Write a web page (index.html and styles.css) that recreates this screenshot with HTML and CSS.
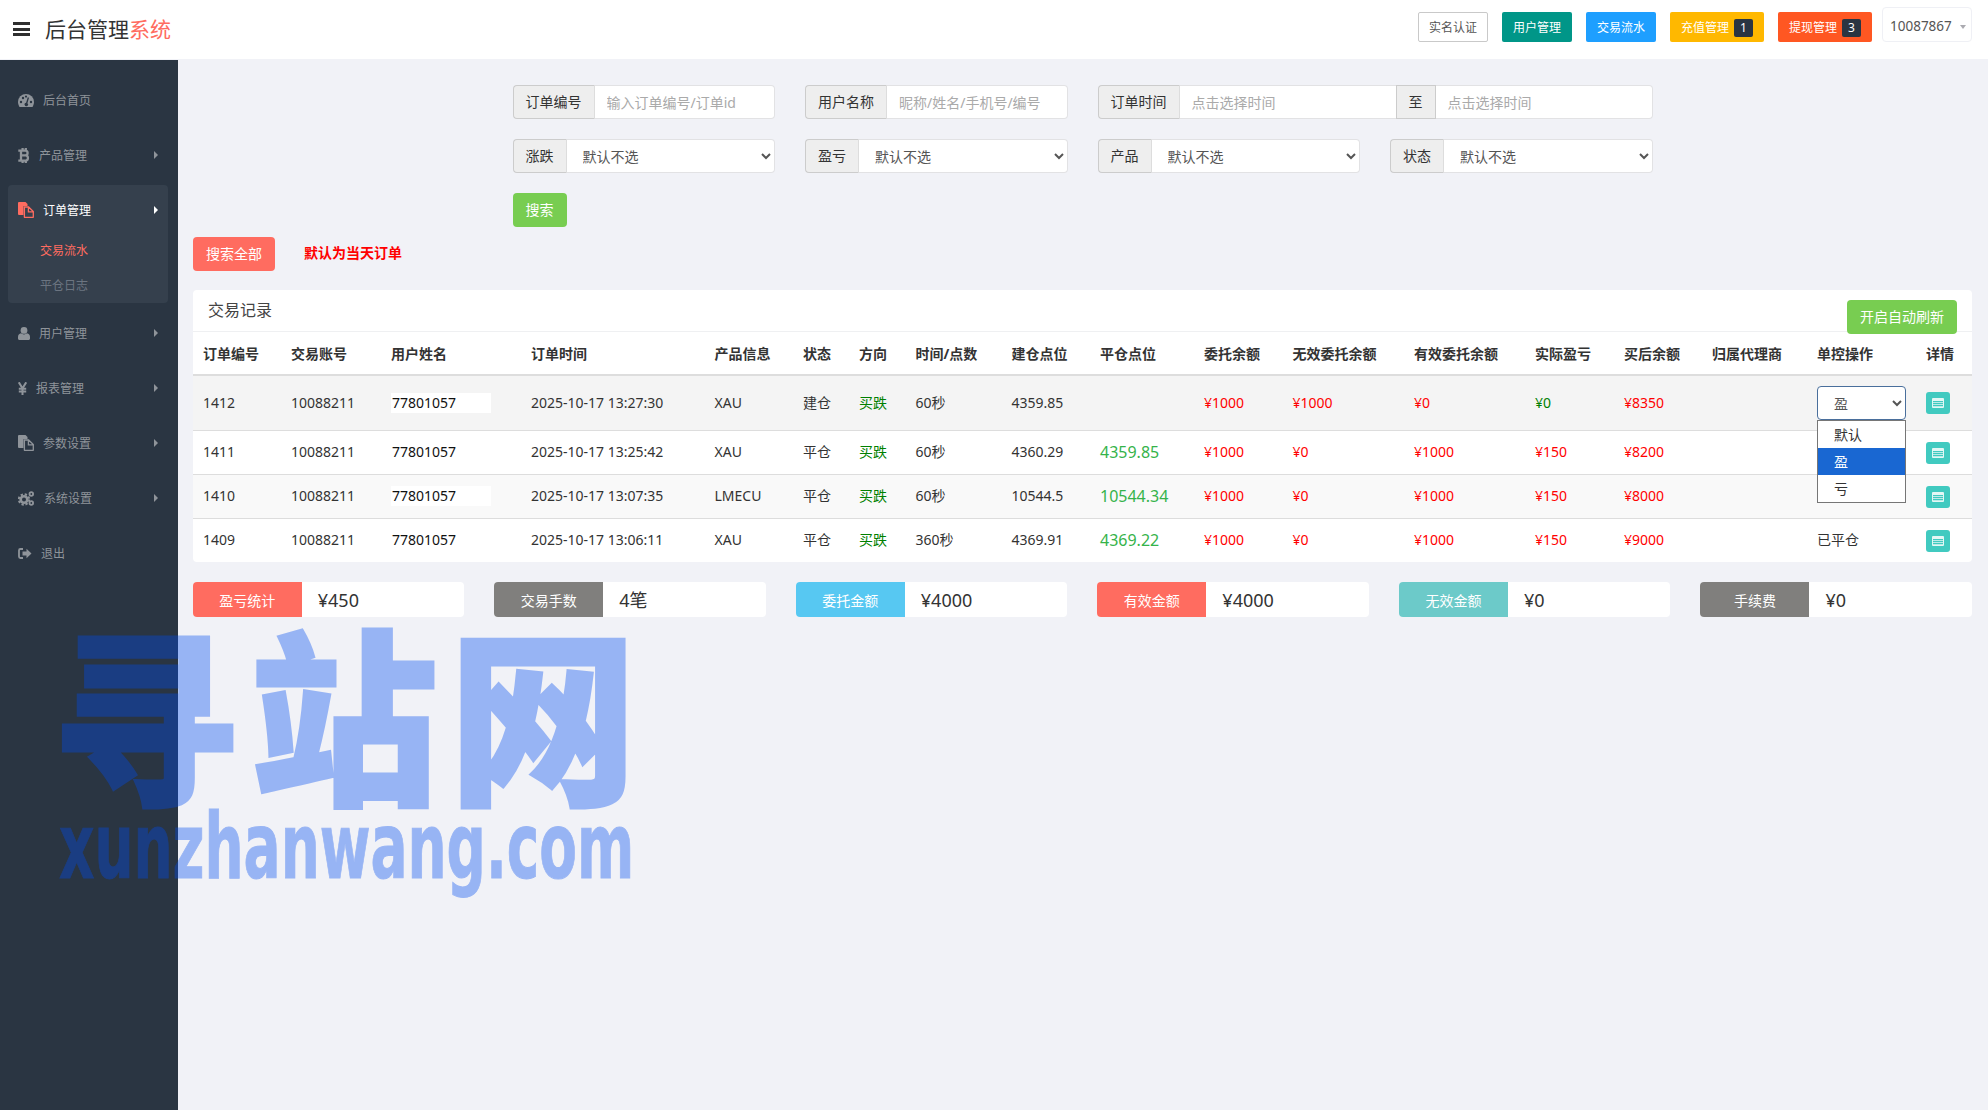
FILE: index.html
```html
<!DOCTYPE html>
<html lang="zh-CN">
<head>
<meta charset="utf-8">
<title>后台管理系统</title>
<link rel="stylesheet" href="styles.css">
</head>
<body>
<header class="topbar">
  <div class="brand">
    <span class="burger"><i></i><i></i><i></i></span>
    <span class="brand-name">后台管理<em>系统</em></span>
  </div>
  <div class="top-actions">
    <a class="tbtn tbtn-plain">实名认证</a>
    <a class="tbtn tbtn-teal">用户管理</a>
    <a class="tbtn tbtn-blue">交易流水</a>
    <a class="tbtn tbtn-yellow">充值管理<b class="badge">1</b></a>
    <a class="tbtn tbtn-orange">提现管理<b class="badge">3</b></a>
    <div class="account">10087867<i class="account-caret"></i></div>
  </div>
</header>
<div class="shell">
  <aside class="sidebar">
    <ul class="nav">
      <li class="nav-item">
        <svg class="nav-icon" width="16" height="13" viewBox="0 0 16 13"><path fill="currentColor" d="M8 0a8 8 0 0 0-8 8c0 1.8.6 3.5 1.5 5h13c.9-1.5 1.500-3.200 1.500-5a8 8 0 0 0-8-8z"/><g fill="#2a3542"><circle cx="3" cy="8" r="1.2"/><circle cx="5" cy="4" r="1.2"/><circle cx="8" cy="2.6" r="1.1"/><circle cx="13" cy="8" r="1.2"/><path d="M9.8 3.2l1.2.5-1.6 5.5a1.7 1.7 0 1 1-1.3-.4z"/></g></svg>
        <span>后台首页</span>
      </li>
      <li class="nav-item has-caret">
        <svg class="nav-icon" width="12" height="15" viewBox="0 0 12 15"><path fill="none" stroke="currentColor" stroke-width="2.3" d="M3 2.6h4.2a2.4 2.4 0 0 1 0 4.8H3h5a2.7 2.7 0 0 1 0 5.2H3M3 1.6v12M.3 2.6h3M.3 12.6h3M4.6 0v2M7.8 0v2M4.6 13v2M7.8 13v2"/></svg>
        <span>产品管理</span>
      </li>
      <li class="nav-group">
        <div class="nav-item has-caret is-open">
          <svg class="nav-icon nav-icon-hot" width="16" height="16" viewBox="0 0 16 16"><path fill="currentColor" d="M1 0h6.500L9.500 2V4H5.500v9H1a1 1 0 0 1-1-1V1a1 1 0 0 1 1-1z"/><path fill="none" stroke="currentColor" stroke-width="1.300" d="M6.400 5h4.200l4.700 4.600v5.300a.5.500 0 0 1-.5.500H6.900a.5.500 0 0 1-.5-.5zM10.400 5.200V9.800h4.700"/></svg>
          <span>订单管理</span>
        </div>
        <ul class="subnav">
          <li class="subnav-item is-current">交易流水</li>
          <li class="subnav-item">平仓日志</li>
        </ul>
      </li>
      <li class="nav-item has-caret">
        <svg class="nav-icon" width="12" height="13" viewBox="0 0 12 13"><circle cx="6" cy="3.400" r="3.400" fill="currentColor"/><path fill="currentColor" d="M0 11.500V10c0-2 1.200-3.300 3-3.700.8.700 1.900 1.100 3 1.100s2.200-.4 3-1.100c1.800.4 3 1.700 3 3.700v1.500c0 .9-.7 1.500-1.500 1.500h-9C.7 13 0 12.400 0 11.500z"/></svg>
        <span>用户管理</span>
      </li>
      <li class="nav-item has-caret">
        <svg class="nav-icon" width="9" height="13" viewBox="0 0 9 13"><path fill="none" stroke="currentColor" stroke-width="2" d="M.8.300l3.700 6 3.700-6M4.500 6v7M.8 6.800h7.400M.8 9.600h7.400"/></svg>
        <span>报表管理</span>
      </li>
      <li class="nav-item has-caret">
        <svg class="nav-icon" width="16" height="16" viewBox="0 0 16 16"><path fill="currentColor" d="M1 0h6.500L9.500 2V4H5.500v9H1a1 1 0 0 1-1-1V1a1 1 0 0 1 1-1z"/><path fill="none" stroke="currentColor" stroke-width="1.300" d="M6.400 5h4.200l4.700 4.600v5.300a.5.500 0 0 1-.5.500H6.900a.5.500 0 0 1-.5-.5zM10.400 5.200V9.800h4.700"/></svg>
        <span>参数设置</span>
      </li>
      <li class="nav-item has-caret">
        <svg class="nav-icon" width="17" height="15" viewBox="0 0 17 15"><g fill="none" stroke="currentColor"><circle cx="6" cy="8.500" r="3.300" stroke-width="2.600"/><circle cx="6" cy="8.500" r="5.200" stroke-width="2" stroke-dasharray="2.300 1.800"/><circle cx="13.300" cy="3" r="1.800" stroke-width="1.800"/><circle cx="13.300" cy="12" r="1.800" stroke-width="1.800"/></g></svg>
        <span>系统设置</span>
      </li>
      <li class="nav-item">
        <svg class="nav-icon" width="14" height="11" viewBox="0 0 14 11"><path fill="none" stroke="currentColor" stroke-width="1.800" d="M5 1H2.400A1.400 1.400 0 0 0 1 2.400v6.200A1.400 1.400 0 0 0 2.400 10H5"/><path fill="currentColor" d="M4.500 3.500h4V.8L13.500 5.500 8.500 10.200V7.500h-4z"/></svg>
        <span>退出</span>
      </li>
    </ul>
  </aside>

  <main class="main">
    <form class="filters">
      <label class="field"><span class="addon">订单编号</span><input class="control" placeholder="输入订单编号/订单id"></label>
      <label class="field"><span class="addon">用户名称</span><input class="control" placeholder="昵称/姓名/手机号/编号"></label>
      <div class="field field-wide"><span class="addon">订单时间</span><input class="control" placeholder="点击选择时间"><span class="addon addon-mid">至</span><input class="control" placeholder="点击选择时间"></div>
      <label class="field"><span class="addon">涨跌</span><select class="control"><option>默认不选</option></select></label>
      <label class="field"><span class="addon">盈亏</span><select class="control"><option>默认不选</option></select></label>
      <label class="field"><span class="addon">产品</span><select class="control"><option>默认不选</option></select></label>
      <label class="field"><span class="addon">状态</span><select class="control"><option>默认不选</option></select></label>
      <button type="button" class="search-btn">搜索</button>
    </form>

    <div class="scope">
      <a class="scope-all">搜索全部</a>
      <strong class="scope-note">默认为当天订单</strong>
    </div>

    <section class="card">
      <div class="card-head">
        <h2>交易记录</h2>
        <a class="refresh-btn">开启自动刷新</a>
      </div>
      <table class="orders">
        <colgroup><col><col><col><col><col><col><col><col><col><col><col><col><col><col><col><col><col><col></colgroup>
        <thead>
          <tr><th>订单编号</th><th>交易账号</th><th>用户姓名</th><th>订单时间</th><th>产品信息</th><th>状态</th><th>方向</th><th>时间/点数</th><th>建仓点位</th><th>平仓点位</th><th>委托余额</th><th>无效委托余额</th><th>有效委托余额</th><th>实际盈亏</th><th>买后余额</th><th>归属代理商</th><th>单控操作</th><th>详情</th></tr>
        </thead>
        <tbody>
          <tr class="row-hover">
            <td>1412</td><td>10088211</td><td><span class="name">77801057</span></td><td>2025-10-17 13:27:30</td><td>XAU</td><td>建仓</td><td class="dir">买跌</td><td>60秒</td><td>4359.85</td><td></td><td class="red">¥1000</td><td class="red">¥1000</td><td class="red">¥0</td><td class="dir">¥0</td><td class="red">¥8350</td><td></td>
            <td>
              <div class="control-pick">
                <select class="pick"><option>默认</option><option selected>盈</option><option>亏</option></select>
                <ul class="pick-list"><li>默认</li><li class="is-on">盈</li><li>亏</li></ul>
              </div>
            </td>
            <td><a class="detail"><svg width="12" height="10" viewBox="0 0 12 10"><path fill="#e4f7f5" fill-rule="evenodd" d="M1 0h10a1 1 0 0 1 1 1v8a1 1 0 0 1-1 1H1a1 1 0 0 1-1-1V1a1 1 0 0 1 1-1zM1 3v1.200h10V3zM1 5v1.200h10V5zM1 7v1.200h10V7z"/></svg></a></td>
          </tr>
          <tr>
            <td>1411</td><td>10088211</td><td><span class="name">77801057</span></td><td>2025-10-17 13:25:42</td><td>XAU</td><td>平仓</td><td class="dir">买跌</td><td>60秒</td><td>4360.29</td><td class="close">4359.85</td><td class="red">¥1000</td><td class="red">¥0</td><td class="red">¥1000</td><td class="red">¥150</td><td class="red">¥8200</td><td></td><td></td>
            <td><a class="detail"><svg width="12" height="10" viewBox="0 0 12 10"><path fill="#e4f7f5" fill-rule="evenodd" d="M1 0h10a1 1 0 0 1 1 1v8a1 1 0 0 1-1 1H1a1 1 0 0 1-1-1V1a1 1 0 0 1 1-1zM1 3v1.200h10V3zM1 5v1.200h10V5zM1 7v1.200h10V7z"/></svg></a></td>
          </tr>
          <tr class="row-soft">
            <td>1410</td><td>10088211</td><td><span class="name">77801057</span></td><td>2025-10-17 13:07:35</td><td>LMECU</td><td>平仓</td><td class="dir">买跌</td><td>60秒</td><td>10544.5</td><td class="close">10544.34</td><td class="red">¥1000</td><td class="red">¥0</td><td class="red">¥1000</td><td class="red">¥150</td><td class="red">¥8000</td><td></td><td></td>
            <td><a class="detail"><svg width="12" height="10" viewBox="0 0 12 10"><path fill="#e4f7f5" fill-rule="evenodd" d="M1 0h10a1 1 0 0 1 1 1v8a1 1 0 0 1-1 1H1a1 1 0 0 1-1-1V1a1 1 0 0 1 1-1zM1 3v1.200h10V3zM1 5v1.200h10V5zM1 7v1.200h10V7z"/></svg></a></td>
          </tr>
          <tr class="row-last">
            <td>1409</td><td>10088211</td><td><span class="name">77801057</span></td><td>2025-10-17 13:06:11</td><td>XAU</td><td>平仓</td><td class="dir">买跌</td><td>360秒</td><td>4369.91</td><td class="close">4369.22</td><td class="red">¥1000</td><td class="red">¥0</td><td class="red">¥1000</td><td class="red">¥150</td><td class="red">¥9000</td><td></td><td>已平仓</td>
            <td><a class="detail"><svg width="12" height="10" viewBox="0 0 12 10"><path fill="#e4f7f5" fill-rule="evenodd" d="M1 0h10a1 1 0 0 1 1 1v8a1 1 0 0 1-1 1H1a1 1 0 0 1-1-1V1a1 1 0 0 1 1-1zM1 3v1.200h10V3zM1 5v1.200h10V5zM1 7v1.200h10V7z"/></svg></a></td>
          </tr>
        </tbody>
      </table>
    </section>

    <section class="stats">
      <div class="stat"><span class="stat-label bg-red">盈亏统计</span><span class="stat-value">¥450</span></div>
      <div class="stat"><span class="stat-label bg-grey">交易手数</span><span class="stat-value">4笔</span></div>
      <div class="stat"><span class="stat-label bg-sky">委托金额</span><span class="stat-value">¥4000</span></div>
      <div class="stat"><span class="stat-label bg-red">有效金额</span><span class="stat-value">¥4000</span></div>
      <div class="stat"><span class="stat-label bg-aqua">无效金额</span><span class="stat-value">¥0</span></div>
      <div class="stat"><span class="stat-label bg-grey">手续费</span><span class="stat-value">¥0</span></div>
    </section>
  </main>
</div>
<div class="watermark">
  <div class="wm-cn">寻站网</div>
  <div class="wm-en">xunzhanwang.com</div>
</div>
</body>
</html>
```
FILE: styles.css
```css
* { box-sizing: border-box; }
html, body { margin: 0; height: 100%; }
body {
  position: relative;
  height: 1110px;
  overflow: hidden;
  display: flex;
  flex-direction: column;
  background: #f1f2f7;
  color: #333;
  font: 14px/20px "Noto Sans", "Noto Sans CJK SC", sans-serif;
}
ul { list-style: none; margin: 0; padding: 0; }
a { text-decoration: none; }

/* top bar */
.topbar {
  flex: none;
  height: 60px;
  padding-bottom: 1px;
  background: #fff;
  border-bottom: 1px solid #f1f2f7;
  display: flex;
  justify-content: space-between;
  align-items: flex-start;
}
.brand { display: flex; align-items: center; height: 58px; padding-left: 13px; }
.burger { display: flex; flex-direction: column; gap: 2.5px; width: 17px; margin-right: 15px; }
.burger i { display: block; height: 3px; background: #2f2f2f; }
.brand-name { font-size: 21px; line-height: 30px; color: #333; }
.brand-name em { font-style: normal; color: #ff6c60; }

.top-actions { display: flex; align-items: flex-end; gap: 14px; height: 35px; margin-top: 7px; margin-right: 16px; }
.tbtn {
  display: flex;
  align-items: center;
  justify-content: center;
  height: 30px;
  width: 70px;
  padding-top: 2px;
  border-radius: 2px;
  color: #fff;
  font-size: 12px;
}
.tbtn-plain { background: #fff; border: 1px solid #c9c9c9; color: #555; }
.tbtn-teal { background: #009688; }
.tbtn-blue { background: #1e9fff; }
.tbtn-yellow { background: #ffb800; width: 94px; }
.tbtn-orange { background: #ff5722; width: 94px; }
.badge {
  display: block;
  width: 19px;
  height: 18px;
  margin-left: 5px;
  border-radius: 2px;
  background: #2a3542;
  color: #fff;
  font-weight: 400;
  font-size: 12px;
  line-height: 18px;
  text-align: center;
}
.account {
  display: flex;
  align-items: center;
  width: 90px;
  height: 35px;
  margin-left: -4px;
  padding: 2px 0 0 7px;
  background: #fff;
  border: 1px solid #eff0f5;
  border-radius: 4px;
  color: #555;
  font-size: 13.500px;
}
.account-caret {
  width: 0;
  height: 0;
  margin-left: 8px;
  margin-top: 2px;
  border: 3.500px solid transparent;
  border-top: 4px solid #aaaab0;
  border-bottom: 0;
}

/* shell */
.shell { flex: 1; display: flex; min-height: 0; }
.sidebar { flex: none; width: 178px; background: #2a3542; padding: 15px 10px 0 8px; }
.nav { display: flex; flex-direction: column; gap: 5px; }
.nav-item {
  position: relative;
  display: flex;
  align-items: center;
  gap: 9px;
  height: 50px;
  padding-left: 10px;
  color: #8f949a;
  font-size: 12px;
}
.nav-item span { padding-top: 1px; }
.nav-icon { flex: none; color: #8f949a; }
.nav-icon-hot { color: #ff6c60; }
.has-caret::after {
  content: "";
  position: absolute;
  right: 10px;
  top: 21px;
  border-left: 4px solid #8f949a;
  border-top: 4px solid transparent;
  border-bottom: 4px solid transparent;
}
.nav-group { background: #35404d; border-radius: 4px; height: 118px; }
.is-open { color: #fff; }
.is-open::after { border-left-color: #fff; }
.subnav { margin-top: -2px; }
.subnav-item { height: 35px; line-height: 35px; padding-left: 32px; color: #6c7581; font-size: 12px; }
.subnav-item.is-current { color: #ff6c60; }

/* main */
.main { flex: 1; min-width: 0; padding: 25px 16px 0 15px; }
.filters {
  width: 1140px;
  margin-left: 319.500px;
  display: grid;
  grid-template-columns: repeat(4, 1fr);
  gap: 20px 30px;
}
.field { display: flex; height: 34px; }
.field-wide { grid-column: span 2; }
.addon {
  flex: none;
  padding: 0 12px;
  line-height: 32px;
  background: #eee;
  border: 1px solid #ccc;
  border-right-color: #ddd;
  border-radius: 4px 0 0 4px;
  color: #333;
}
.addon-mid { border-radius: 0; border-right-color: #ccc; }
.control {
  flex: 1 1 0;
  width: 0;
  min-width: 0;
  height: 34px;
  padding: 0 12px;
  background: #fff;
  border: 1px solid #e2e2e4;
  border-left: 0;
  border-radius: 0 4px 4px 0;
  color: #555;
  font: inherit;
  outline: 0;
}
.addon-mid + .control { border-left: 0; }
.field-wide .control:first-of-type { border-radius: 0; border-right: 0; }
.control::placeholder { color: #aaa; }
.search-btn {
  grid-column: 1;
  justify-self: start;
  width: 54px;
  height: 34px;
  padding: 0;
  background: #78cd51;
  border: 0;
  border-radius: 4px;
  color: #fff;
  font: inherit;
}

.scope { display: flex; align-items: center; gap: 29px; margin-top: 10px; height: 34px; }
.scope-all {
  display: block;
  width: 82px;
  height: 34px;
  line-height: 34px;
  text-align: center;
  background: #ff6c60;
  border-radius: 4px;
  color: #fff;
}
.scope-note { color: #f00; font-weight: 700; margin-bottom: 2px; }

/* card */
.card { margin-top: 19px; background: #fff; border-radius: 4px; }
.card-head {
  display: flex;
  justify-content: space-between;
  align-items: flex-start;
  height: 42px;
  padding: 0 15px;
  border-bottom: 1px solid #eff0f2;
}
.card-head h2 { margin: 10px 0 0; font-size: 16px; line-height: 20px; font-weight: 400; color: #444; }
.refresh-btn {
  display: block;
  width: 110px;
  height: 34px;
  margin-top: 10px;
  line-height: 34px;
  text-align: center;
  background: #78cd51;
  border-radius: 4px;
  color: #fff;
  position: relative;
}
.orders { width: 1779px; table-layout: fixed; border-collapse: separate; border-spacing: 0; }
.orders col:nth-child(1) { width: 88px; }
.orders col:nth-child(2) { width: 100px; }
.orders col:nth-child(3) { width: 140px; }
.orders col:nth-child(4) { width: 183.500px; }
.orders col:nth-child(5) { width: 88.500px; }
.orders col:nth-child(6) { width: 56px; }
.orders col:nth-child(7) { width: 56.500px; }
.orders col:nth-child(8) { width: 96px; }
.orders col:nth-child(9) { width: 88.500px; }
.orders col:nth-child(10) { width: 104px; }
.orders col:nth-child(11) { width: 88.500px; }
.orders col:nth-child(12) { width: 121.500px; }
.orders col:nth-child(13) { width: 121px; }
.orders col:nth-child(14) { width: 89px; }
.orders col:nth-child(15) { width: 88px; }
.orders col:nth-child(16) { width: 105px; }
.orders col:nth-child(17) { width: 109px; }
.orders col:nth-child(18) { width: 56px; }
.orders th, .orders td { padding: 0 10px; text-align: left; white-space: nowrap; overflow: visible; }
.orders th {
  height: 44px;
  padding-top: 2px;
  border-bottom: 2px solid #ddd;
  font-weight: 700;
  color: #333;
}
.orders td { height: 44px; padding-bottom: 2px; border-bottom: 1px solid #ddd; color: #333; }
.orders td:last-child { padding-bottom: 0; }
.row-hover td { height: 55px; padding-bottom: 0; background: #f4f4f4; }
.row-soft td { background: #f9f9f9; }
.row-last td { height: 43px; border-bottom: 0; }
.name { display: inline-block; width: 100px; height: 20px; padding-left: 1px; background: #fff; color: #111; vertical-align: top; }
.red { color: #f00 !important; }
.dir { color: #008000 !important; }
.close { color: #35b34a !important; font-size: 16px; }
.control-pick { position: relative; width: 89px; }
.pick {
  display: block;
  width: 89px;
  height: 34px;
  padding: 0 12px;
  background: #fff;
  border: 1px solid #4a6f9c;
  border-radius: 4px;
  color: #555;
  font: inherit;
  outline: 0;
}
.pick-list {
  position: absolute;
  z-index: 3;
  left: 0;
  top: 34px;
  width: 89px;
  padding: 0;
  background: #fff;
  border: 1px solid #767676;
  color: #333;
}
.pick-list li { height: 27px; line-height: 27px; padding-left: 16px; }
.pick-list li.is-on { background: #1967d2; color: #fff; }
.detail {
  display: flex;
  align-items: center;
  justify-content: center;
  width: 24px;
  height: 22px;
  background: #41cac0;
  border-radius: 3px;
}

/* stats */
.stats {
  display: grid;
  grid-template-columns: repeat(6, 1fr);
  gap: 30px;
  margin: 20px 0 0 -.25px;
}
.stat { display: flex; height: 35px; background: #fff; border-radius: 4px; overflow: hidden; }
.stat-label {
  flex: none;
  width: 109px;
  padding-top: 1px;
  line-height: 35px;
  text-align: center;
  color: #fff;
}
.stat-value { padding: 1px 0 0 16px; font-size: 18px; line-height: 35px; color: #333; }
.bg-red { background: #ff6c60; }
.bg-grey { background: #807f7d; }
.bg-sky { background: #57c8f2; }
.bg-aqua { background: #6ccac9; }

/* watermark */
.watermark {
  position: absolute;
  left: 51px;
  top: 613px;
  width: 600px;
  color: #004cf0;
  opacity: .37;
  pointer-events: none;
}
.wm-cn {
  font-family: "Noto Sans CJK SC", sans-serif;
  font-weight: 900;
  font-size: 188px;
  line-height: 190px;
  letter-spacing: 11px;
  white-space: nowrap;
  -webkit-text-stroke: 3px #004cf0;
}
.wm-en {
  margin: -1px 0 0 8px;
  font-family: "DejaVu Sans", sans-serif;
  font-weight: 700;
  font-size: 90px;
  line-height: 90px;
  white-space: nowrap;
  -webkit-text-stroke: 1px #004cf0;
  transform: scaleX(.61);
  transform-origin: left center;
}
```
